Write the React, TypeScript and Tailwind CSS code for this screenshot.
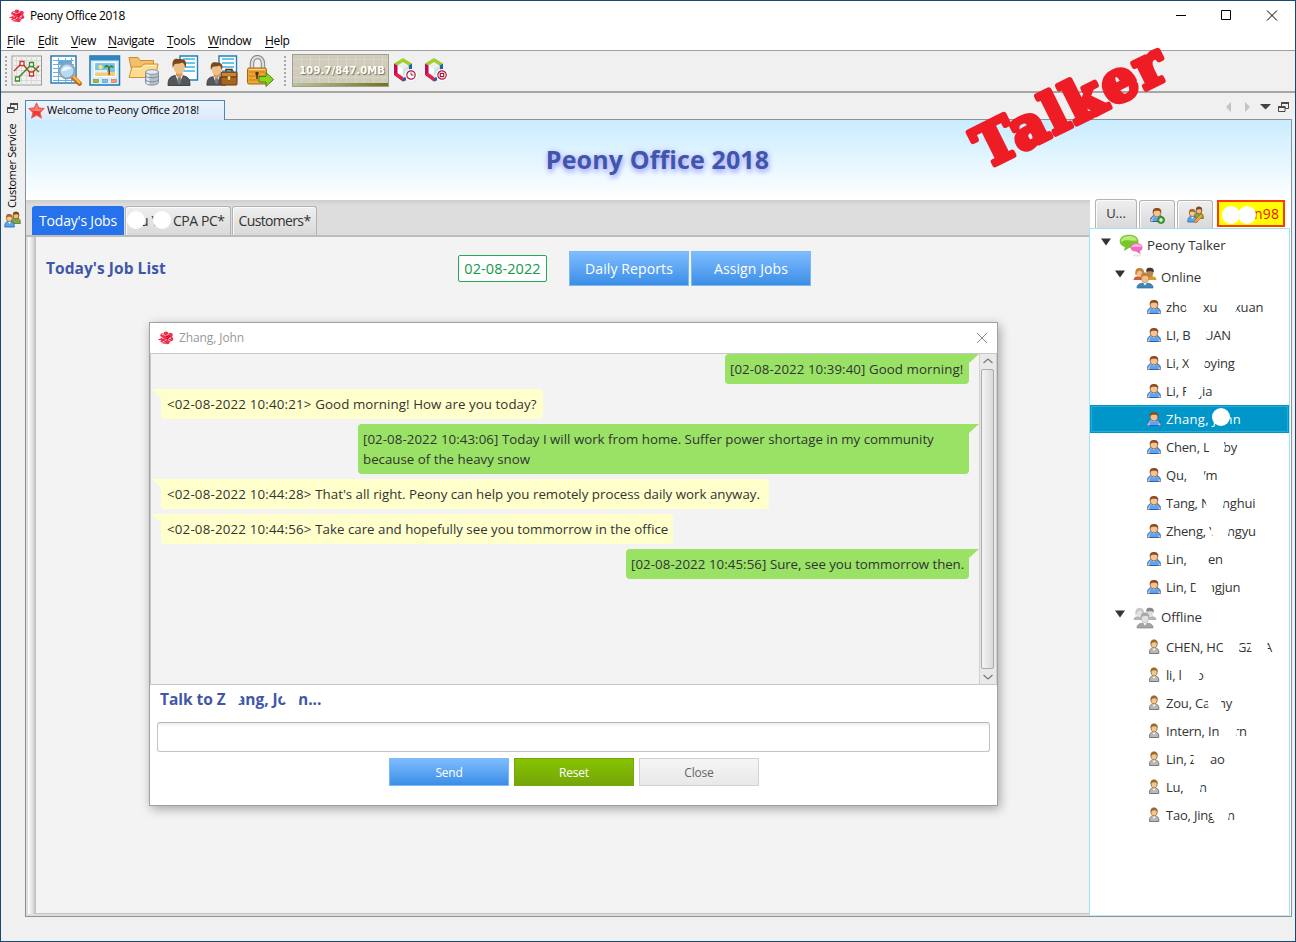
import React from 'react';

type Seg = [text: string, width: number];
type Mask = [x: number, width: number];
type Contact = { segs: Seg[]; masks?: Mask[]; selected?: boolean };

const online: Contact[] = [
  { segs: [['zho', 37], ['xu', 31], ['xuan', 40]], masks: [[20, 16], [53, 18]] },
  { segs: [['LI, B', 38], ['UAN', 40]], masks: [[25, 16]] },
  { segs: [['Li, X', 37], ['oying', 40]], masks: [[22, 17]] },
  { segs: [['Li, F', 33], ['jia', 40]], masks: [[20, 16]] },
  { segs: [['Zhang, John', 90]], masks: [[46, 18]], selected: true },
  { segs: [['Chen, L', 57], ['by', 40]], masks: [[42, 17]] },
  { segs: [['Qu, ', 35], ['/m', 40]], masks: [[22, 16]] },
  { segs: [['Tang, N', 56], ['nghui', 40]], masks: [[40, 18]] },
  { segs: [['Zheng, Y', 61], ['ngyu', 40]], masks: [[45, 18]] },
  { segs: [['Lin,', 42], ['en', 40]] },
  { segs: [['Lin, D', 41], ['ngjun', 40]], masks: [[29, 17]] },
];

const offline: Contact[] = [
  { segs: [['CHEN, HO', 71], ['GZ', 27], ['A', 10]], masks: [[56, 18], [84, 18]] },
  { segs: [['li, l', 30], ['o', 20]], masks: [[17, 17]] },
  { segs: [['Zou, Ca', 52], ['hy', 30]], masks: [[42, 13]] },
  { segs: [['Intern, In', 68], ['rn', 20]], masks: [[54, 17]] },
  { segs: [['Lin, Z', 44], ['ao', 30]], masks: [[27, 17]] },
  { segs: [['Lu,', 33], ['n', 20]], masks: [[17, 18]] },
  { segs: [['Tao, Jing', 61], ['n', 20]], masks: [[46, 17]] },
];

function Peony() {
  return (
    <svg width="16" height="14" viewBox="0 0 16 14">
      <g fill="#f0304c">
        <circle cx="9" cy="7" r="4.800" />
        <circle cx="4.500" cy="4.500" r="2.200" />
        <circle cx="8" cy="3" r="2.400" />
        <circle cx="12.500" cy="4" r="2.300" />
        <circle cx="13.300" cy="8" r="2" />
        <circle cx="9.500" cy="11" r="2.200" />
        <path d="M0 8.500l5-2 1 4-3 .5zM3 12l4-2 1 3z" />
      </g>
      <path d="M0 9.500h3M3.500 6.500l2 1M6 3.500l2 2M11 2.500l-2 2M13 7l-2 .5M7 9.500l1.500-1M4 3.500h1.500M11.500 10l-1-1.500M5 10.500l1.500.5M2 6h1.500M12 12l1-1" stroke="#ffe3e7" strokeWidth="1" />
      <path d="M7.500 6l2-.8 1 1.500-1.500 1.300M10.500 4.500l1.500 1.500" stroke="#c00024" strokeWidth="1" fill="none" />
    </svg>
  );
}

function ChartIcon() {
  return (
    <svg width="32" height="32" viewBox="0 0 32 32">
      <rect x="1" y="1" width="29.500" height="29" fill="#f0f0f0" stroke="#9b9b9b" />
      <path d="M5.500 1v29M10.500 1v29M15.500 1v29M20.500 1v29M25.500 1v29M1 5.500h29M1 10.500h29M1 15.500h29M1 20.500h29M1 25.500h29" stroke="#dadada" />
      <path d="M3 16l8-8 9 11 8-8" stroke="#c8342b" strokeWidth="1.500" fill="none" />
      <path d="M6 24L20 10l8 7" stroke="#3d8c20" strokeWidth="1.500" fill="none" />
      <g fill="#fff" strokeWidth="1.300">
        <path d="M9 6.500h4v4H9zM18.500 17h4v4h-4z" stroke="#c8342b" />
        <path d="M4.500 22h4v4h-4zM18.500 7.500h4v4h-4z" stroke="#3d8c20" />
      </g>
    </svg>
  );
}

function SearchTableIcon() {
  return (
    <svg width="32" height="32" viewBox="0 0 32 32">
      <rect x="1" y="1" width="25" height="27" fill="#fff" stroke="#1d73ae" strokeWidth="1.400" />
      <path d="M8 5h8v5H8zM16 5h6v5h-6z" fill="#5ba9de" />
      <path d="M3 5.500h21M3 9.500h21M3 13.500h21M3 17.500h21M3 21.500h21M3 25.500h21M8.500 3v24M15.500 3v24M21.500 3v24" stroke="#6aaede" />
      <path d="M22 21l7.500 7.500" stroke="#b76914" strokeWidth="4.600" strokeLinecap="round" />
      <path d="M23 21l6.500 6.500" stroke="#ffb143" strokeWidth="2.500" strokeLinecap="round" />
      <circle cx="17" cy="16" r="7.500" fill="#b6dbf5" stroke="#8fa3b3" strokeWidth="2" />
      <path d="M11.500 16a5.500 5.500 0 0 1 10-2c-4-.5-6 3-10 2z" fill="#eef8ff" />
    </svg>
  );
}

function PictureIcon() {
  return (
    <svg width="32" height="32" viewBox="0 0 32 32">
      <rect x="1" y="1" width="29.500" height="29" fill="#d7edf9" stroke="#1f77b2" strokeWidth="1.500" />
      <path d="M1 1h29.500v4.500H1z" fill="#2f86bf" />
      <rect x="5.500" y="7.500" width="21" height="14" fill="#74c4f0" stroke="#fff" strokeWidth="1.200" />
      <path d="M6 17h20v4H6z" fill="#f3cd72" />
      <path d="M6 15h12v2.500H6z" fill="#dff3fb" />
      <circle cx="11.500" cy="12" r="2.200" fill="#ffe561" />
      <path d="M20 20c1-3 .5-5-.5-8" stroke="#7a4a1a" strokeWidth="1.500" fill="none" />
      <path d="M15 13c1-4 4-4 5-1 1-3 5-2 5 1-2-1-4-1-4.500 1-1-2-3.500-2-5.500-1z" fill="#3d8a2e" />
      <rect x="4.500" y="24.500" width="5" height="3" fill="#a9b82f" stroke="#7c8d1c" strokeWidth=".6" />
      <rect x="13.500" y="24.500" width="5" height="3" fill="#7fc1ee" stroke="#4a90c4" strokeWidth=".6" />
      <rect x="22.500" y="24.500" width="5" height="3" fill="#ff9670" stroke="#dd6b46" strokeWidth=".6" />
    </svg>
  );
}

function FolderDbIcon() {
  return (
    <svg width="32" height="32" viewBox="0 0 32 32">
      <path d="M1 2.500h9l2 3h13.500V14L5 22z" fill="#f2c06a" stroke="#c98d2f" />
      <path d="M1 22.500L4 12h9l3-3h14l-2.500 13.500z" fill="#ffdc8e" stroke="#cd9335" />
      <path d="M5 13.500h9l3-3h11" stroke="#fff0c4" fill="none" />
      <path d="M17.500 17v10.500c0 3.500 13 3.500 13 0V17z" fill="#b6c0cb" stroke="#8793a0" />
      <path d="M20 19v10" stroke="#e8eef5" strokeWidth="2.500" />
      <path d="M17.500 20.500c0 3 13 3 13 0M17.500 24.500c0 3 13 3 13 0" stroke="#7d8b99" fill="none" />
      <ellipse cx="24" cy="17" rx="6.500" ry="2.300" fill="#e5ebf1" stroke="#8793a0" />
    </svg>
  );
}

function Businessman({ small }: { small?: boolean }) {
  return (
    <svg width="32" height="32" viewBox="0 0 32 32">
      <path d="M13 1h17.500v24H13z" fill="#fff" stroke="#1d82ba" strokeWidth="1.400" />
      <path d="M16 4h12M16 8h12M16 12h12M16 16h12" stroke="#3cb2e6" strokeWidth="1.600" />
      <g transform={small ? 'translate(0 4) scale(.86)' : ''}>
        <path d="M1 30.500c0-7 2-9 7-10h7c6 1 8 3 8 10z" fill="#55575c" stroke="#2e3034" strokeWidth=".8" />
        <path d="M8.500 20l3.500 9 4-9z" fill="#fff" />
        <path d="M11 21h2.500l.8 6-2 3-2-3z" fill="#777" />
        <path d="M9 16h6.500v4.500L12 23l-3-2.500z" fill="#d79a5c" />
        <ellipse cx="12.300" cy="12" rx="5.700" ry="7" fill="#efc18a" />
        <path d="M5.800 13C4 2 10 3.500 13 4c6-.5 7 4 5.500 9-1-2-1-4-3-5.500-2.500 1.500-6 1-7.500 1.500-1 1-1.500 2-2.200 4z" fill="#79481f" />
      </g>
      {small && (
        <g>
          <path d="M20 16.500v-2h6v2" fill="none" stroke="#5b3210" strokeWidth="1.500" />
          <rect x="15" y="17" width="16" height="13" rx="1" fill="#a9661f" stroke="#643711" />
          <path d="M15 22h16" stroke="#643711" />
          <path d="M16 18h14v3H16z" fill="#c8873c" />
          <rect x="21.500" y="21" width="3" height="4" fill="#ffdf79" stroke="#7a5113" strokeWidth=".5" />
        </g>
      )}
    </svg>
  );
}

function LockIcon() {
  return (
    <svg width="32" height="32" viewBox="0 0 32 32">
      <path d="M7 14V8.500c0-8.500 11-8.500 11 0V14" fill="none" stroke="#858585" strokeWidth="4.400" />
      <path d="M7 14V8.500c0-8.500 11-8.500 11 0V14" fill="none" stroke="#dedede" strokeWidth="2.400" />
      <rect x="2.500" y="13" width="19" height="16" rx="1.500" fill="#eca637" stroke="#a8660f" />
      <path d="M4 17h16M4 21h16M4 25h16" stroke="#c77d19" strokeWidth="1" />
      <path d="M4 14.500h16" stroke="#ffd98a" />
      <circle cx="12" cy="18.500" r="1.700" fill="#4c2f08" />
      <path d="M11.300 19h1.500v5h-1.500z" fill="#4c2f08" />
      <path d="M14 21.500h7v-4l7.500 7-7.500 7v-4.500h-7z" fill="#8ed321" stroke="#42840d" />
    </svg>
  );
}

function Cube({ stop }: { stop?: boolean }) {
  return (
    <svg width="25" height="26" viewBox="0 0 25 26">
      <path d="M1 6.500L10 1l9 5.500-3.500 2L10 5 4.500 8.500z" fill="#a3cd28" />
      <path d="M1 6.500l3.500 2v9L10 21v3.500L1 18z" fill="#ba0f50" />
      <path d="M1 17l3.500-1L10 20v4.500z" fill="#ed1c4b" />
      <path d="M19 6.500v6h-3.500v-4zM10 21l3-1.500v4L10 24.500z" fill="#1765b5" />
      <path d="M5 9l5-3 5.500 3v6.500L10 19l-5-3z" fill="#e8efec" />
      <path d="M5 9l5 3v7l-5-3z" fill="#fff" />
      <path d="M10 12l5.500-3v6L10 19z" fill="#d5e3df" />
      <circle cx="18" cy="18" r="6" fill="#fff" />
      <circle cx="18" cy="18" r="4.200" fill="#fff" stroke="#ad1740" strokeWidth="1.200" />
      {stop ? <path d="M16.300 16.300h3.400v3.400h-3.400z" fill="#fff" stroke="#ad1740" strokeWidth="1.200" /> : <path d="M18 15.500V18h2.500" fill="none" stroke="#ad1740" />}
    </svg>
  );
}

function Star() {
  return (
    <svg width="17" height="17" viewBox="0 0 17 17">
      <path d="M8.500.8l2.300 5 5.600.7-4.200 3.900 1.300 5.800-5-2.900-5 2.900 1.300-5.800L.6 6.500l5.600-.7z" fill="#f23a31" stroke="#e0675f" strokeWidth=".8" strokeLinejoin="round" />
      <path d="M8.500 2.200l1.700 4.300 4.700.5-3 2.200-6.900-.4L2.100 7l4.700-.5z" fill="#ff9c93" opacity=".7" />
    </svg>
  );
}

function User({ gray }: { gray?: boolean }) {
  return gray ? (
    <svg width="16" height="16" viewBox="0 0 16 16">
      <path d="M3.500 14.500c0-4 1-5 3-5.500h3c2.500.5 3.300 1.500 3.300 5.500z" fill="#b9b9b9" stroke="#777" />
      <path d="M6.500 9l1.500 3 1.700-3z" fill="#fff" />
      <path d="M5 4.500C5 2 6 1 8 1s3.200 1 3.200 3.500S10 9 8 9 5 7 5 4.500z" fill="#efc88f" stroke="#8a5c22" strokeWidth=".8" />
      <path d="M4.600 5C4.500 1.500 6 .7 8 .7s3.800 1 3.500 4.300C10.500 3.500 9 3 8 3.500 6.500 3.500 5.500 3.500 4.600 5z" fill="#9a6a2c" />
    </svg>
  ) : (
    <svg width="16" height="16" viewBox="0 0 16 16">
      <path d="M1.500 14.500c0-4 1.500-5.500 4-6h5c2.500.5 4 2 4 6z" fill="#5aa5f5" stroke="#2d5fb0" />
      <path d="M3 13.800c0-3 1-4 3-4.500l2 1.500 2-1.500" fill="none" stroke="#9fd0ff" />
      <path d="M1.500 12.500h2v2h-2zM12.500 12.500h2v2h-2z" fill="#efbd88" />
      <ellipse cx="8" cy="6" rx="3.800" ry="4" fill="#f3c493" stroke="#9c5f2c" strokeWidth=".8" />
      <path d="M3.800 6C3.300 2 5.300 1 8 1s4.800 1 4.200 5C11.500 4 10 3.800 8 3.800S4.500 4 3.800 6z" fill="#8a4d1f" />
    </svg>
  );
}

function Pair() {
  return (
    <svg width="17" height="17" viewBox="0 0 17 17">
      <path d="M7.500 12.500c0-4 1-5 3-5.500h3c2 .5 2.800 1.500 2.800 5.500z" fill="#81a743" stroke="#50762a" strokeWidth=".8" />
      <ellipse cx="12" cy="4.500" rx="2.900" ry="3.500" fill="#efbd80" stroke="#7a4a1b" strokeWidth=".8" />
      <path d="M9 4.500C9 1 10 .7 12 .7s3.500.8 3 4c-1-1.500-4-2-6-.2z" fill="#7a4a1b" />
      <path d="M.8 16c0-4 1-5 3-5.500h3c2.500.5 3.500 1.500 3.500 5.500z" fill="#5aa5ef" stroke="#275ea8" strokeWidth=".8" />
      <path d="M4 10.500l1.500 2.500L7 10.500z" fill="#fff" />
      <ellipse cx="5.300" cy="7" rx="3" ry="3.500" fill="#f3cb94" stroke="#9a6226" strokeWidth=".8" />
      <path d="M2.200 7C2 3.500 3.300 3 5.300 3s3.500 1 3 4c-1-1.500-4-2-6.100 0z" fill="#a36b2c" />
    </svg>
  );
}

function Group({ gray }: { gray?: boolean }) {
  const c = gray
    ? ['#e2e2e2', '#b5b5b5', '#b5b5b5', '#8a8a8a', '#c9c9c9', '#a4a4a4']
    : ['#f1c08a', '#d35a3b', '#d99b26', '#46392c', '#c8813a', '#3f86b5'];
  return (
    <svg width="24" height="22" viewBox="0 0 24 22">
      <path d="M.5 13c.5-3 2-3.500 5-4h2c3 .5 4.500 1 5 4z" fill={c[1]} />
      <path d="M11.500 13c.5-3 2-3.500 5-4h2c3 .5 4.500 1 5 4z" fill={c[2]} />
      <ellipse cx="6.500" cy="5.800" rx="3.300" ry="4.300" fill={c[0]} />
      <path d="M2.500 8.500C1.500 1 5 .8 7 1c3.500 0 5 3 3.500 8C9.500 4 7 3 4.500 4.500c-.5 1.500-.5 3-2 4z" fill={c[4]} />
      <ellipse cx="17" cy="5.800" rx="3.200" ry="4.500" fill={gray ? '#dedede' : '#b98450'} />
      <path d="M13.300 5C13 1 15 .8 17 .8s4.500 1 3.700 4.700C19 3.500 15 4 13.300 5z" fill={c[3]} />
      <path d="M4 21c0-3.500 2-4.500 6-5h4c4 .5 6 1.500 6 5z" fill={c[5]} stroke={gray ? '#888' : '#2a6b97'} strokeWidth=".7" />
      <path d="M9.500 15l2.500 3.500 2.500-3.500z" fill="#fff" />
      <ellipse cx="12" cy="11" rx="3.700" ry="4.800" fill={c[0]} stroke={gray ? '#aaa' : '#b57b3b'} strokeWidth=".6" />
      <path d="M8 11C7.500 6.500 9.500 5.500 12 5.500s4.700 1.500 4 5.500c-1-2.500-5-3.500-8 0z" fill={gray ? '#a8a8a8' : '#b98640'} />
    </svg>
  );
}

function Bubbles() {
  return (
    <svg width="24" height="23" viewBox="0 0 24 23">
      <ellipse cx="18" cy="21.500" rx="4" ry="1" fill="#e5e5e5" />
      <path d="M10 .8c5.500 0 9.500 2.700 9.500 6.500S16 13.800 10.500 13.800L5 17l.8-4C2.500 12 .7 10 .7 7.300.7 3.500 4.500.8 10 .8z" fill="#76c82a" />
      <path d="M10 2c4.500 0 8 2 8 4.500C14 8 6 4 2 8.500 1.500 4 5.500 2 10 2z" fill="#b9ea7c" />
      <path d="M17.500 9c3.500 0 6 2 6 4.500 0 1.500-1 3-2.500 3.700l.5 3-4-2.500c-3.500 0-6-1.700-6-4.200S14 9 17.500 9z" fill="#f06dbd" />
      <path d="M17.500 10c3 0 5 1.200 5 3-3 .5-7-1-10 .5.300-2 2-3.500 5-3.500z" fill="#ffb3e0" />
    </svg>
  );
}

function Restore() {
  return (
    <svg width="11" height="11" viewBox="0 0 11 11" fill="none" stroke="#4a4a4a">
      <path d="M3.500 4.500V1M3 1h8M10.500 1v5.500H7" />
      <path d="M3 1h8M0 5h7.500" strokeWidth="2" />
      <path d="M.5 5v4.500h6.500V5" />
    </svg>
  );
}

function Arrow() {
  return (
    <svg width="10" height="8" viewBox="0 0 10 8">
      <path d="M0 .5h10L5 7.500z" fill="#333" />
    </svg>
  );
}

function Grip() {
  return (
    <svg width="2" height="30" viewBox="0 0 2 30">
      <path d="M1 0v30" stroke="#a9a9a9" strokeWidth="2" strokeDasharray="2 2" />
    </svg>
  );
}

function ContactRow({ c, gray }: { c: Contact; gray?: boolean }) {
  return (
    <div className={`flex h-7 items-center pl-[56px] ${c.selected ? 'bg-[#0096c9] text-white outline outline-1 -outline-offset-2 outline-[#2ba9d5]' : 'bg-white text-[#333]'}`}>
      <User gray={gray} />
      <div className={`relative ml-[4px] flex whitespace-pre text-[13px] leading-[20px] ${c.selected ? 'tracking-[0.300px]' : 'tracking-[-0.200px]'}`}>
        {c.segs.map(([t, w], i) => (
          <span key={i} className="shrink-0" style={{ width: w }}>{t}</span>
        ))}
        {c.masks?.map(([x, w], i) => (
          <span key={i} className={`absolute h-[18px] rounded-full bg-white ${c.selected ? '-top-[1px]' : 'top-[1px]'}`} style={{ left: x, width: w }} />
        ))}
      </div>
    </div>
  );
}

function Message({ mine, time, className, children }: { mine?: boolean; time: string; className: string; children: React.ReactNode }) {
  return (
    <div className={`relative py-[5px] text-[13.300px] leading-[20px] whitespace-nowrap text-[#333] ${mine ? 'mr-[10px] self-end rounded-[4px] rounded-tr-none bg-[#99e265] pl-[5px]' : 'ml-[10px] self-start rounded-[4px] rounded-tl-none bg-[#ffffcb] pl-[6px]'} ${className}`}>
      <span className={mine ? 'tracking-[0.060px]' : 'tracking-[0.190px]'}>{mine ? `[${time}]` : `<${time}>`} </span>
      {children}
      <svg width="10" height="10" viewBox="0 0 10 10" className={`absolute top-0 ${mine ? 'left-full' : 'right-full'}`}>
        <path d={mine ? 'M0 0h10L0 9z' : 'M10 0H1l9 9z'} fill={mine ? '#99e265' : '#ffffcb'} />
      </svg>
    </div>
  );
}

const menus: [string, string][] = [
  ['File', 'w-[31px]'], ['Edit', 'w-[33px]'], ['View', 'w-[37px]'], ['Navigate', 'w-[59px]'], ['Tools', 'w-[41px]'], ['Window', 'w-[57px]'], ['Help', 'w-[30px]'],
];

const blueBtn = 'flex items-center justify-center border border-[#7db8f3] bg-linear-to-b from-[#7dbcff] to-[#3a8ee6] text-white';
const grayTab = 'rounded-t-[3px] border border-b-0 border-[#b3b3b3] bg-linear-to-b from-[#efefef] to-[#d9d9d9] shadow-[inset_1px_1px_0_#fafafa]';

export default function App() {
  return (
    <div className="relative flex h-[942px] w-[1296px] flex-col overflow-hidden border border-[#184a70] bg-[#f0f0f0] font-['Open_Sans','Noto_Sans',sans-serif] text-black">
      <header className="flex h-[30px] shrink-0 items-center bg-white pl-[8px]">
        <Peony />
        <span className="ml-[5px] text-[12px] tracking-[-0.360px]">Peony Office 2018</span>
        <svg className="ml-auto mr-[16px]" width="103" height="12" viewBox="0 0 103 12" fill="none" stroke="#000">
          <path d="M0 5.500h10" />
          <path d="M45.500.5h9v9h-9z" />
          <path d="M91 .5l10 10M101 .5l-10 10" />
        </svg>
      </header>
      <nav className="flex h-[20px] shrink-0 items-center border-b border-[#a0a0a0] bg-white pl-[6px] text-[12px] tracking-[-0.350px]">
        {menus.map(([m, w]) => (
          <span key={m} className={`${w} shrink-0`}><u className="underline-offset-2">{m[0]}</u>{m.slice(1)}</span>
        ))}
      </nav>
      <div className="flex h-[42px] shrink-0 items-center border-b-2 border-[#a6a6a6] pb-px pl-[4px]">
        <Grip />
        <div className="ml-[4px] flex gap-[7px]">
          <ChartIcon /><SearchTableIcon /><PictureIcon /><FolderDbIcon /><Businessman /><Businessman small /><LockIcon />
        </div>
        <div className="ml-[7px]"><Grip /></div>
        <div className="ml-[6px] flex h-[33px] w-[97px] flex-col justify-between border border-[#a29f8e] bg-[#cfccbb] bg-[repeating-linear-gradient(90deg,transparent_0_8px,#d9d6c7_8px_9px),repeating-linear-gradient(0deg,transparent_0_8px,#d9d6c7_8px_9px)]">
          <span className="pt-[8px] pr-[3px] text-right font-['DejaVu_Sans_Condensed','DejaVu_Sans',sans-serif] text-[11px] leading-[15px] font-bold tracking-[0.160px] text-white [text-shadow:1px_1px_1px_#77745f]">109.7/847.0MB</span>
          <span className="h-[3px] bg-linear-to-r from-[#b9c49b] to-[#747319]" />
        </div>
        <div className="ml-[4px] flex gap-[6px] pb-[2px]"><Cube /><Cube stop /></div>
      </div>

      <div className="flex min-h-0 grow">
        <aside className="flex w-[24px] shrink-0 flex-col items-center pt-[10px]">
          <div className="-ml-[2px]"><Restore /></div>
          <span className="mt-[8px] h-[86px] rotate-180 pl-[3px] text-[11px] leading-[14px] tracking-[-0.320px] whitespace-nowrap [writing-mode:vertical-rl]">Customer Service</span>
          <div className="mt-[3px] -ml-[1px]"><Pair /></div>
        </aside>
        <div className="flex w-[1267px] flex-col">
          <div className="flex h-[26px] shrink-0 items-end justify-between">
            <div className="z-10 -mb-px flex h-[20px] w-[200px] items-center border border-b-0 border-[#4d86b8] bg-linear-to-b from-[#ecf4fd] to-[#dbeafa] pl-[2px]">
              <Star />
              <span className="ml-[2px] text-[11px] tracking-[-0.250px] whitespace-nowrap">Welcome to Peony Office 2018!</span>
            </div>
            <div className="flex items-center gap-[9px] self-center pt-[2px] pr-[3px]">
              <svg width="25" height="10" viewBox="0 0 25 10"><path d="M5 0v10L0 5zM19 0v10l5-5z" fill="#c3c3c3" /></svg>
              <svg width="11" height="6" viewBox="0 0 11 6"><path d="M0 0h11L5.500 5.500z" fill="#444" /></svg>
              <div className="-ml-[2px]"><Restore /></div>
            </div>
          </div>
          <div className="flex h-[798px] flex-col border border-[#8a929c] bg-white">
            <div className="flex h-[80px] shrink-0 items-center justify-center bg-linear-to-b from-[#c9ecff] to-white pr-[2px]">
              <h1 className="text-[25px] font-bold tracking-[0.120px] text-[#3f57a8] [text-shadow:1px_3px_5px_#a9a9ff,0_0_6px_#c4c4ff]">Peony Office 2018</h1>
            </div>
            <div className="flex min-h-0 grow">
              <main className="flex w-[1064px] shrink-0 flex-col bg-[#ddd]">
                <div className="flex h-[37px] shrink-0 items-end gap-px border-b-2 border-[#bcbcbc] bg-linear-to-b from-[#cecece] via-[#ddd] via-15% to-[#ddd] pl-[6px] text-[14px] text-[#333]">
                  <div className="flex h-[29px] w-[92px] items-center justify-center rounded-t-[3px] bg-[#2672ec] tracking-[-0.200px] whitespace-nowrap text-white">Today's Jobs</div>
                  <div className={`relative flex h-[29px] w-[106px] items-center pb-px pl-[14px] whitespace-pre ${grayTab}`}>
                    <span className="w-[33px] shrink-0 tracking-[-0.300px]">u Yu</span>
                    <span className="tracking-[-0.450px]">CPA PC*</span>
                    <i className="absolute top-[4px] left-[1px] size-[18px] rounded-full bg-white" />
                    <i className="absolute top-[4px] left-[27px] size-[18px] rounded-full bg-white" />
                  </div>
                  <div className={`flex h-[29px] w-[85px] items-center justify-center pb-px tracking-[-0.650px] ${grayTab}`}>Customers*</div>
                </div>
                <div className="flex min-h-0 grow border-r border-[#c8c8c8] pb-[2px] pl-[2px]">
                  <div className="w-[6px] shrink-0 bg-linear-to-r from-white to-[#d6d6d6]" />
                  <section className="flex grow flex-col border-b border-l-2 border-[#c5c5c5] bg-[#f3f3f3]">
                    <div className="flex h-[63px] shrink-0 items-center pl-[10px]">
                      <h2 className="w-[412px] text-[15.500px] font-bold tracking-[0.050px] text-[#3f57a8]">Today's Job List</h2>
                      <div className="flex h-[27px] w-[89px] items-center justify-center rounded-[2px] border border-[#22a955] bg-white text-[14.500px] tracking-[0.060px] text-[#139b4a]">02-08-2022</div>
                      <div className="ml-[22px] flex gap-[2px] text-[14px] tracking-[0.100px]">
                        <button className={`h-[35px] w-[120px] ${blueBtn}`}>Daily Reports</button>
                        <button className={`h-[35px] w-[120px] ${blueBtn}`}>Assign Jobs</button>
                      </div>
                    </div>
                    <div className="mt-[22px] ml-[113px] flex h-[484px] w-[849px] flex-col border border-[#a0a0a0] bg-white shadow-[2px_3px_10px_rgba(0,0,0,.32)]">
                      <div className="flex h-[30px] shrink-0 items-center pr-[9px] pl-[8px]">
                        <Peony />
                        <span className="ml-[5px] text-[12px] tracking-[-0.100px] text-[#999]">Zhang, John</span>
                        <svg className="ml-auto" width="12" height="12" viewBox="0 0 12 12"><path d="M1 1l10 10M11 1L1 11" stroke="#888" /></svg>
                      </div>
                      <div className="flex h-[332px] shrink-0 border border-r-0 border-[#c8c8c8] bg-[#f3f3f3]">
                        <div className="flex grow flex-col gap-[5px]">
                          <Message mine time="02-08-2022 10:39:40" className="w-[244px]"><span className="tracking-[0.080px]">Good morning!</span></Message>
                          <Message time="02-08-2022 10:40:21" className="w-[382px]"><span className="tracking-[0.070px]">Good morning! How are you today?</span></Message>
                          <Message mine time="02-08-2022 10:43:06" className="w-[611px]">Today I will work from home. Suffer power shortage in my community<br />because of the heavy snow</Message>
                          <Message time="02-08-2022 10:44:28" className="w-[608px]">That's all right. Peony can help you remotely process daily work anyway.</Message>
                          <Message time="02-08-2022 10:44:56" className="w-[512px]">Take care and hopefully see you tommorrow in the office</Message>
                          <Message mine time="02-08-2022 10:45:56" className="w-[343px]"><span className="tracking-[-0.070px]">Sure, see you tommorrow then.</span></Message>
                        </div>
                        <div className="flex w-[18px] shrink-0 flex-col items-center justify-between border-x border-[#d0d0d0] bg-[#e9e9e9] py-[4px] pr-px">
                          <svg width="10" height="6" viewBox="0 0 10 6"><path d="M.5 5L5 1l4.500 4" fill="none" stroke="#777" strokeWidth="1.200" /></svg>
                          <div className="h-[300px] w-[13px] rounded-[2px] border border-[#aaa] bg-linear-to-r from-[#f4f4f4] to-[#d9d9d9]" />
                          <svg width="10" height="6" viewBox="0 0 10 6"><path d="M.5 1L5 5l4.500-4" fill="none" stroke="#777" strokeWidth="1.200" /></svg>
                        </div>
                      </div>
                      <div className="flex h-[37px] shrink-0 items-center px-[10px] pb-[7px]">
                        <span className="relative flex text-[15.500px] font-bold tracking-[-0.050px] whitespace-pre text-[#3f57a8]">
                          <span className="w-[76px]">Talk to Z</span>
                          <span className="w-[54px]">ang, Jo</span>
                          <span className="pl-[8px]">n...</span>
                          <i className="absolute top-[2px] left-[64px] size-[17px] rounded-full bg-white" />
                          <i className="absolute top-[-1px] left-[122px] size-[18px] rounded-full bg-white" />
                        </span>
                      </div>
                      <input className="mx-[7px] h-[30px] shrink-0 rounded-[3px] border border-[#c4c4c4] border-t-[#b5b5b5] bg-white shadow-[inset_0_3px_3px_-1px_#eee] outline-none" />
                      <div className="mt-[6px] flex justify-center gap-[5px] text-[12px] tracking-[-0.200px]">
                        <button className={`h-[28px] w-[120px] pt-[2px] pl-px ${blueBtn}`}>Send</button>
                        <button className="h-[28px] w-[120px] border border-[#74a808] bg-linear-to-b from-[#86c400] to-[#76a50a] pt-[2px] pl-px text-white">Reset</button>
                        <button className="h-[28px] w-[120px] border border-[#d2d2d2] bg-linear-to-b from-[#f5f5f5] to-[#e8e8e8] pt-[2px] pl-px text-[#666]">Close</button>
                      </div>
                    </div>
                  </section>
                </div>
              </main>
              <aside className="flex grow flex-col">
                <div className="flex h-[28px] shrink-0 items-end gap-[2px] pl-[5px] text-[14px] text-[#333]">
                  <div className={`-mt-px flex h-[29px] w-[42px] items-center justify-center text-[13px] ${grayTab}`}>U...</div>
                  <div className={`relative flex h-[28px] w-[36px] items-center justify-center ${grayTab}`}>
                    <User />
                    <svg className="absolute right-[9px] bottom-[4px]" width="8" height="8" viewBox="0 0 8 8"><circle cx="4" cy="4" r="3.600" fill="#3da32e" stroke="#236b1d" strokeWidth=".6" /><path d="M4 2v4M2 4h4" stroke="#fff" strokeWidth="1.200" /></svg>
                  </div>
                  <div className={`relative flex h-[28px] w-[36px] items-center justify-center ${grayTab}`}>
                    <Pair />
                    <svg className="absolute right-[9px] bottom-[5px]" width="9" height="9" viewBox="0 0 9 9"><path d="M0 9l1-3 6-6 2 2-6 6z" fill="#f2a52b" stroke="#b86b13" strokeWidth=".6" /></svg>
                  </div>
                  <div className="relative mb-px ml-[2px] flex h-[27px] w-[68px] items-center justify-end border-2 border-[#ff3c00] bg-[#ff0] pr-[4px] tracking-[0.100px] text-[#f01000]">
                    jin98
                    <i className="absolute top-[4px] left-[3px] size-[18px] rounded-full bg-white" />
                    <i className="absolute top-[4px] left-[19px] size-[18px] rounded-full bg-white" />
                  </div>
                </div>
                <div className="mr-px -ml-px flex grow flex-col border border-[#9fe3fa] border-b-[#c5e9f5] bg-white text-[13.300px] tracking-[-0.100px] text-[#333]">
                  <div className="flex h-[32px] shrink-0 items-center pl-[11px]">
                    <div className="mb-[6px]"><Arrow /></div>
                    <div className="ml-[8px]"><Bubbles /></div>
                    <span className="ml-[4px] pt-px">Peony Talker</span>
                  </div>
                  <div className="flex h-[32px] shrink-0 items-center pl-[25px]">
                    <div className="mb-[6px]"><Arrow /></div>
                    <div className="ml-[8px] pt-px"><Group /></div>
                    <span className="ml-[4px] pt-px">Online</span>
                  </div>
                  {online.map((c, i) => <ContactRow key={i} c={c} />)}
                  <div className="flex h-[32px] shrink-0 items-center pl-[25px]">
                    <div className="mb-[6px]"><Arrow /></div>
                    <div className="ml-[8px] pt-px"><Group gray /></div>
                    <span className="ml-[4px] pt-px">Offline</span>
                  </div>
                  {offline.map((c, i) => <ContactRow key={i} c={c} gray />)}
                </div>
              </aside>
            </div>
          </div>
        </div>
      </div>

      <svg className="absolute top-[9px] left-[929px] z-20 overflow-visible" width="290" height="210" viewBox="0 0 290 210">
        <text
          transform="translate(56 159) rotate(-26.500) scale(.98 1)"
          fill="#ee1c24"
          stroke="#ee1c24"
          strokeWidth="5.500"
          strokeLinejoin="round"
          className="font-['DejaVu_Serif',serif] text-[56px] font-bold tracking-[2.500px]"
        >
          Talker
        </text>
      </svg>
    </div>
  );
}
